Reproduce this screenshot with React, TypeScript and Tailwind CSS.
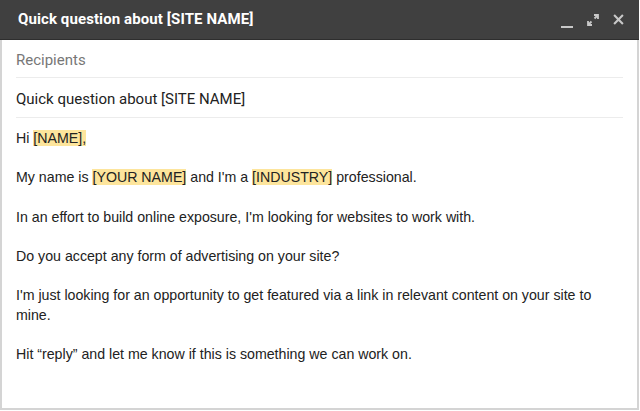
import React from 'react';

function Tag({ children }: { children: React.ReactNode }) {
  return <span className="bg-[#fde59c]">{children}</span>;
}

export default function App() {
  return (
    <div className="w-[640px] h-[411px] bg-white">
      <div className="w-[639px] h-[410px] flex flex-col border-l-2 border-r-2 border-b-2 border-[#d4d4d4]">
        <div className="h-[40px] -mx-[2px] bg-[#404040] flex items-center pl-[18px] pr-[15px] border-b border-[#2e2e2e]">
          <span className="text-white font-bold text-[15px] font-['Roboto',sans-serif] tracking-[0.1px]">
            Quick question about [SITE NAME]
          </span>
          <div className="ml-auto flex items-center gap-[14px] text-[#c8c8c8]">
            <svg width="12" height="12" viewBox="0 0 12 12" className="mt-[8px]">
              <rect x="0" y="8" width="12" height="2" fill="currentColor" />
            </svg>
            <svg width="12" height="12" viewBox="0 0 12 12">
              <path d="M7 1h4v4M11 1L7.5 4.5M5 11H1V7M1 11l3.5-3.5" stroke="currentColor" strokeWidth="1.8" fill="none" />
            </svg>
            <svg width="11" height="11" viewBox="0 0 10 10">
              <path d="M1 1l8 8M9 1l-8 8" stroke="currentColor" strokeWidth="1.9" />
            </svg>
          </div>
        </div>
        <div className="px-[14px] font-['Roboto',sans-serif] text-[15px]">
          <div className="h-[38px] pt-[3px] flex items-center border-b border-[#ececec] text-[#777]">Recipients</div>
          <div className="h-[40px] pt-[4px] flex items-center border-b border-[#ececec] text-[#222]">
            Quick question about [SITE NAME]
          </div>
        </div>
        <div className="px-[14px] pt-[10px] font-['Liberation_Sans',Arial,sans-serif] text-[14.2px] leading-[20px] text-[#222] flex flex-col gap-[19.3px]">
          <p>
            Hi <Tag>[NAME],</Tag>
          </p>
          <p>
            My name is <Tag>[YOUR NAME]</Tag> and I&apos;m a <Tag>[INDUSTRY]</Tag> professional.
          </p>
          <p>In an effort to build online exposure, I&apos;m looking for websites to work with.</p>
          <p>Do you accept any form of advertising on your site?</p>
          <p>
            I&apos;m just looking for an opportunity to get featured via a link in relevant content on your site to
            <br />
            mine.
          </p>
          <p>Hit &ldquo;reply&rdquo; and let me know if this is something we can work on.</p>
        </div>
      </div>
    </div>
  );
}
